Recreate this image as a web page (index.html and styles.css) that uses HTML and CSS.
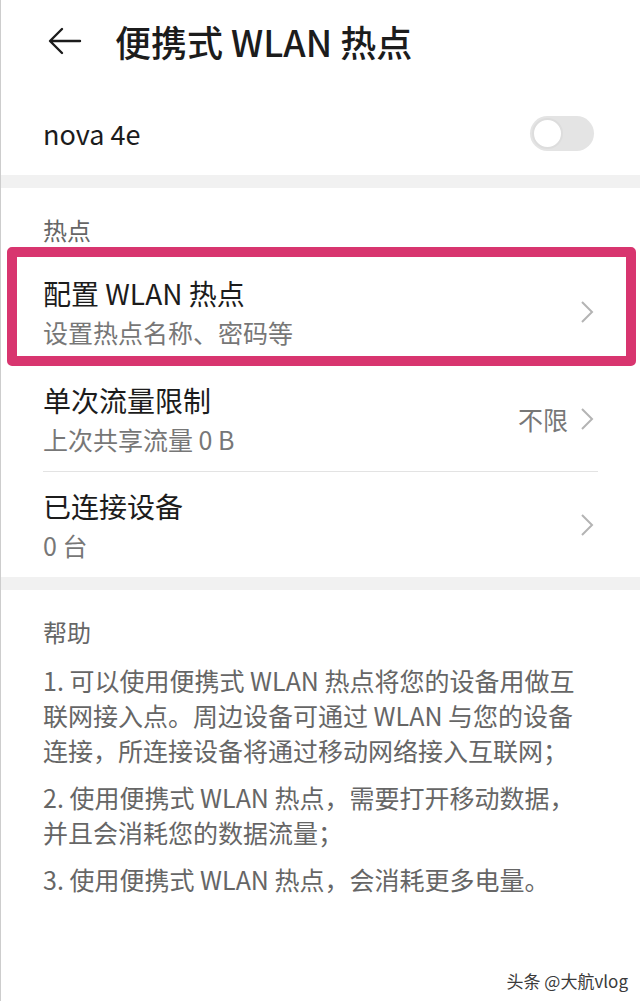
FILE: index.html
```html
<!DOCTYPE html>
<html>
    <link rel="stylesheet" href="styles.css">
    <head>
        <title>便携式 WLAN 热点</title>
    </head>
    <body>
        <div class="page">
            <div class="header">
                <svg class="backArrow" width="34" height="28" viewBox="0 0 34 28">
                    <path d="M32 14 H3 M14 2 L2 14 L14 26" fill="none" stroke="#1c1c1c" stroke-width="2.4" stroke-linecap="round" stroke-linejoin="round"/>
                </svg>
                <div class="header__title">便携式 WLAN 热点</div>
            </div>

            <div class="switchRow">
                <div class="switchRow__name">nova 4e</div>
                <div class="toggle"><div class="toggle__knob"></div></div>
            </div>

            <div class="band"></div>

            <div class="groupLabel">热点</div>

            <div class="item item--marked">
                <div class="item__text">
                    <div class="item__title">配置 WLAN 热点</div>
                    <div class="item__sub">设置热点名称、密码等</div>
                </div>
                <svg class="chevron" width="14" height="24" viewBox="0 0 14 24">
                    <path d="M2 2 L12 12 L2 22" fill="none" stroke="#b4b4b4" stroke-width="2"/>
                </svg>
            </div>

            <div class="item">
                <div class="item__text">
                    <div class="item__title">单次流量限制</div>
                    <div class="item__sub">上次共享流量 0 B</div>
                </div>
                <div class="item__value">不限</div>
                <svg class="chevron" width="14" height="24" viewBox="0 0 14 24">
                    <path d="M2 2 L12 12 L2 22" fill="none" stroke="#b4b4b4" stroke-width="2"/>
                </svg>
            </div>
            <div class="divider"></div>
            <div class="item">
                <div class="item__text">
                    <div class="item__title">已连接设备</div>
                    <div class="item__sub">0 台</div>
                </div>
                <svg class="chevron" width="14" height="24" viewBox="0 0 14 24">
                    <path d="M2 2 L12 12 L2 22" fill="none" stroke="#b4b4b4" stroke-width="2"/>
                </svg>
            </div>

            <div class="band"></div>

            <div class="help">
                <div class="groupLabel groupLabel--help">帮助</div>
                <p class="help__para">1. 可以使用便携式 WLAN 热点将您的设备用做互<br>联网接入点。周边设备可通过 WLAN 与您的设备<br>连接，所连接设备将通过移动网络接入互联网；</p>
                <p class="help__para">2. 使用便携式 WLAN 热点，需要打开移动数据，<br>并且会消耗您的数据流量；</p>
                <p class="help__para">3. 使用便携式 WLAN 热点，会消耗更多电量。</p>
            </div>

            <div class="watermark">头条 @大航vlog</div>
        </div>
    </body>
</html>
```

FILE: styles.css
```css
body{
    margin: 0;
    background: #ffffff;
    font-family: "Noto Sans CJK SC", "Noto Sans", sans-serif;
    color: #1c1c1c;
}
.page{
    width: 640px;
    min-height: 1001px;
    box-sizing: border-box;
    border-left: 1px solid #cdcdcd;
    display: flex;
    flex-direction: column;
}
.header{
    height: 82px;
    display: flex;
    align-items: center;
    padding-left: 47px;
}
.backArrow{
    margin-right: 33px;
}
.header__title{
    font-size: 36px;
    font-weight: 500;
    line-height: 42px;
}
.switchRow{
    height: 84px;
    padding: 9px 46px 0 42px;
    display: flex;
    align-items: center;
    justify-content: space-between;
}
.switchRow__name{
    font-size: 27px;
}
.toggle{
    width: 64px;
    height: 35px;
    border-radius: 18px;
    background: #e4e4e4;
    display: flex;
    align-items: center;
    padding-left: 2px;
    box-sizing: border-box;
}
.toggle__knob{
    width: 27px;
    height: 27px;
    border-radius: 50%;
    background: #ffffff;
    border: 2px solid #dddddd;
}
.band{
    height: 13px;
    background: #f1f1f1;
}
.groupLabel{
    padding: 27px 42px 2px;
    font-size: 24px;
    line-height: 30px;
    color: #666666;
}
.item{
    display: flex;
    align-items: center;
    padding: 14px 46px 13px 42px;
}
.item--marked{
    margin: 0 4px 0 6px;
    border: 10px solid #d8356f;
    border-radius: 5px;
    padding: 16px 32px 5px 26px;
}
.item__text{
    flex: 1;
}
.item__title{
    font-size: 28px;
    line-height: 40px;
}
.item__sub{
    font-size: 25px;
    line-height: 38px;
    color: #777777;
}
.item__value{
    font-size: 25px;
    color: #777777;
    margin-right: 12px;
}
.divider{
    height: 1px;
    margin: 0 42px;
    background: #e3e3e3;
}
.groupLabel--help{
    padding-bottom: 0;
}
.help__para{
    margin: 12px 0 0;
    padding: 0 42px;
    font-size: 25px;
    line-height: 35px;
    color: #666666;
}
.groupLabel--help + .help__para{
    margin-top: 16px;
}
.watermark{
    margin-top: auto;
    align-self: flex-end;
    padding: 0 12px 8px 0;
    font-size: 17px;
    color: #3a3a3a;
}
```
